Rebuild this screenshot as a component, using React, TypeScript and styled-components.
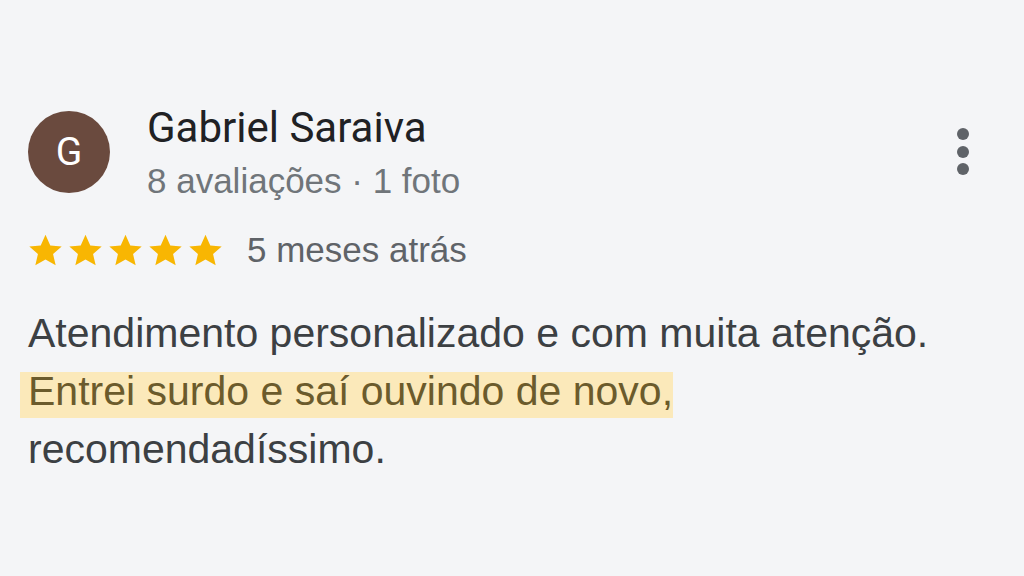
import styled, { createGlobalStyle } from 'styled-components';

const GlobalStyle = createGlobalStyle`
  html, body {
    margin: 0;
    padding: 0;
    background: #f4f5f7;
  }
  body {
    font-family: "Liberation Sans", Arial, sans-serif;
  }
`;

const Page = styled.div`
  width: 1024px;
  height: 576px;
  box-sizing: border-box;
  padding: 111px 0 0 28px;
  background: #f4f5f7;
`;

const Header = styled.div`
  display: flex;
  align-items: flex-start;
`;

const Avatar = styled.div`
  width: 82px;
  height: 82px;
  border-radius: 50%;
  background: #6a4a3e;
  color: #fff;
  display: flex;
  align-items: center;
  justify-content: center;
  font-family: Roboto, "Liberation Sans", sans-serif;
  font-size: 39px;
  flex-shrink: 0;
`;

const Info = styled.div`
  display: flex;
  flex-direction: column;
  margin-left: 37px;
  flex: 1;
`;

const Name = styled.div`
  font-family: Roboto, "Liberation Sans", sans-serif;
  font-size: 42px;
  line-height: 42px;
  color: #202124;
  margin-top: -4px;
`;

const Sub = styled.div`
  font-size: 35px;
  line-height: 40px;
  color: #70757a;
  margin-top: 12px;
`;

const Menu = styled.button`
  border: none;
  background: transparent;
  padding: 0;
  margin: 17px 55px 0 0;
  display: flex;
  flex-direction: column;
  gap: 5.5px;
`;

const Dot = styled.span`
  width: 12px;
  height: 12px;
  border-radius: 50%;
  background: #5f6368;
`;

const RatingRow = styled.div`
  display: flex;
  align-items: center;
  height: 40px;
  margin-top: 29px;
`;

const Stars = styled.div`
  display: flex;
  gap: 3px;
  margin-left: -1px;
`;

const When = styled.span`
  font-size: 35px;
  line-height: 40px;
  color: #5f6368;
  margin-left: 23px;
`;

const Body = styled.p`
  margin: 34px 0 0 0;
  font-size: 41px;
  line-height: 58px;
  color: #3c4043;
`;

const Line = styled.span`
  display: block;
`;

const Highlight = styled.span`
  display: inline-block;
  background: #fbe9ba;
  color: #6b5b2c;
  margin-left: -8px;
  padding: 0 0 8px 8px;
  line-height: 38px;
  vertical-align: baseline;
`;

const Star = () => (
  <svg width="37" height="37" viewBox="0 0 24 24">
    <path
      fill="#f8b602"
      d="M12 1.8l3.1 6.9 7.4.7-5.6 4.9 1.7 7.3L12 17.8l-6.6 3.8 1.7-7.3-5.6-4.9 7.4-.7z"
    />
  </svg>
);

export default function App() {
  return (
    <Page>
      <GlobalStyle />
      <Header>
        <Avatar>G</Avatar>
        <Info>
          <Name>Gabriel Saraiva</Name>
          <Sub>8 avaliações · 1 foto</Sub>
        </Info>
        <Menu aria-label="Mais opções">
          <Dot />
          <Dot />
          <Dot />
        </Menu>
      </Header>
      <RatingRow>
        <Stars>
          {[0, 1, 2, 3, 4].map((i) => (
            <Star key={i} />
          ))}
        </Stars>
        <When>5 meses atrás</When>
      </RatingRow>
      <Body>
        <Line>Atendimento personalizado e com muita atenção.</Line>
        <Line>
          <Highlight>Entrei surdo e saí ouvindo de novo,</Highlight>
        </Line>
        <Line>recomendadíssimo.</Line>
      </Body>
    </Page>
  );
}
